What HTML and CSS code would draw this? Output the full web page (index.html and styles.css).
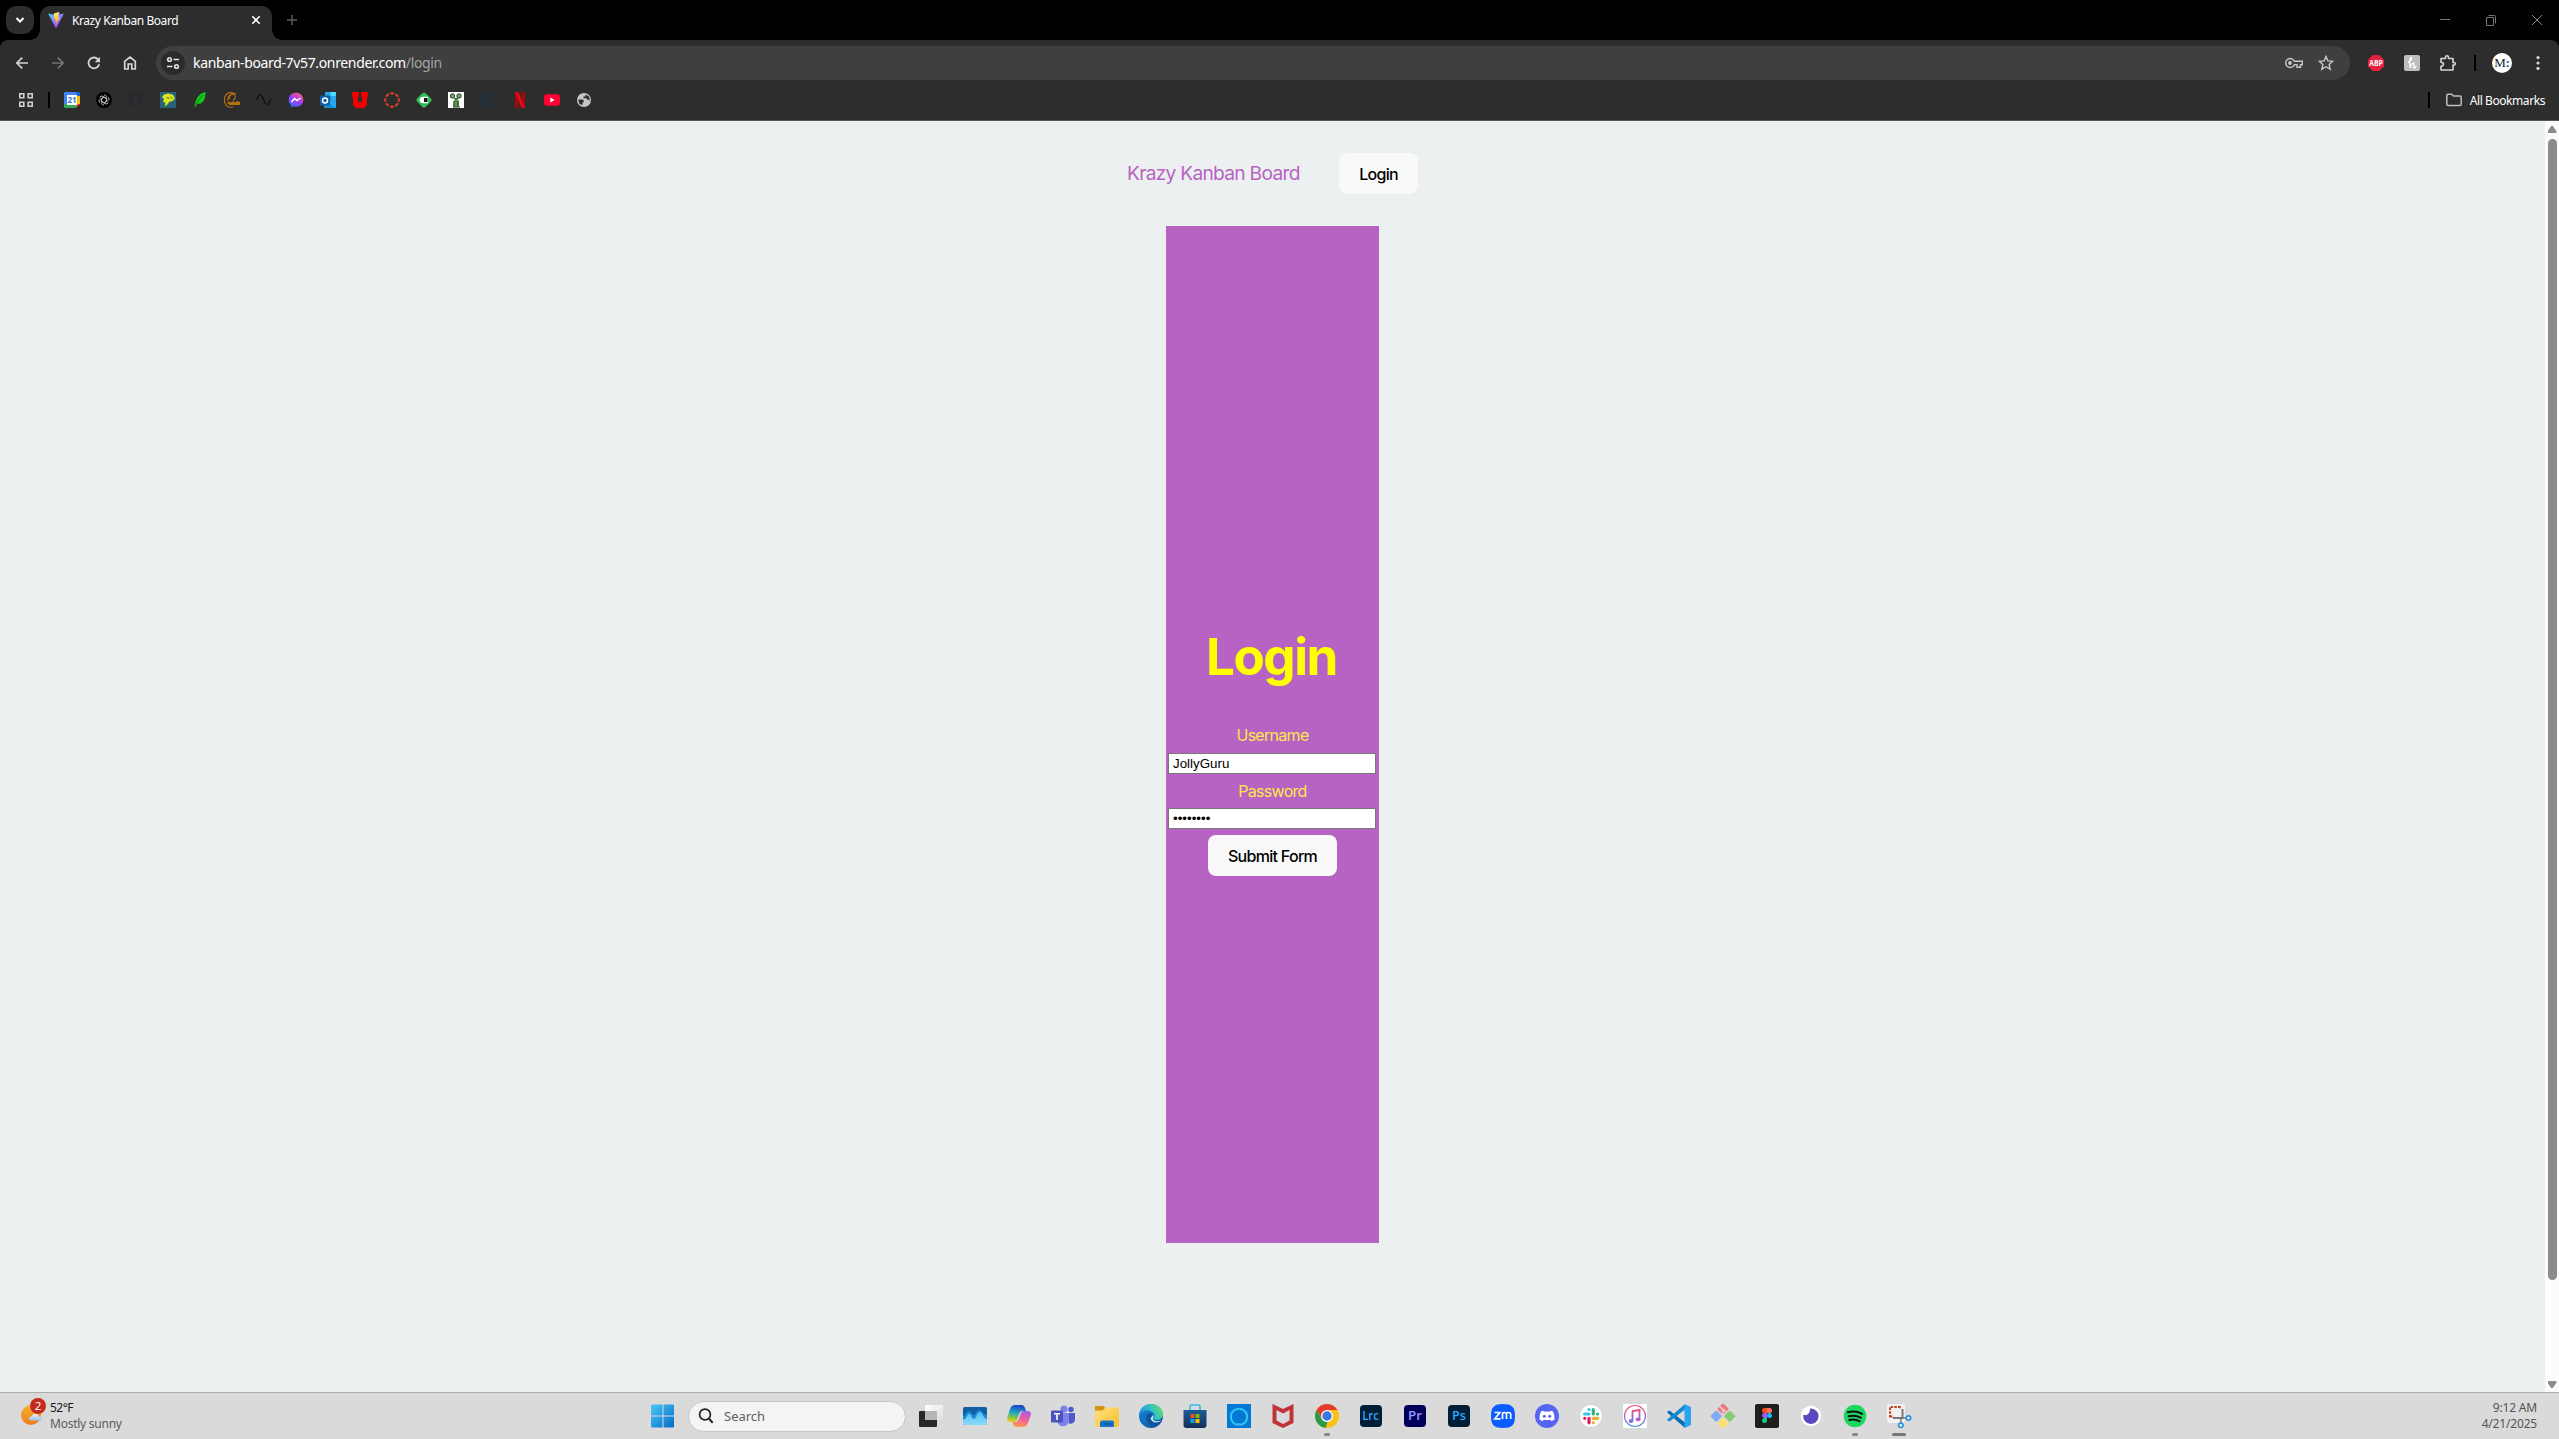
FILE: index.html
```
<!DOCTYPE html>
<html lang="en">
<head>
<meta charset="utf-8">
<title>Krazy Kanban Board</title>
<link rel="stylesheet" href="styles.css">
</head>
<body>
<div class="screen">
  <header class="browser">
    <div class="tabstrip">
      <div class="tab-search"><svg width="12" height="12" viewBox="0 0 12 12"><path d="M2.500 4l3.500 3.600L9.500 4" fill="none" stroke="#fff" stroke-width="2"/></svg></div>
      <div class="tab">
        <svg width="16" height="16" viewBox="0 0 16 16"><defs><linearGradient id="vite" x1="0" y1="0" x2=".7" y2="1"><stop offset="0" stop-color="#41d1ff"/><stop offset="1" stop-color="#bd34fe"/></linearGradient><linearGradient id="bolt" x1="0" y1="0" x2="0" y2="1"><stop offset="0" stop-color="#ffea83"/><stop offset="1" stop-color="#ffa800"/></linearGradient></defs><path d="M0 1.500L8 3l8-1.500L8.300 16H7.700z" fill="url(#vite)"/><path d="M11.500 0L6 1.200 5.600 7l2-.4L7 9.500l1.600-.4L8 12.500l4-7.300-2 .4z" fill="url(#bolt)"/></svg>
        <span class="tab-title">Krazy Kanban Board</span>
        <svg class="tab-close" width="12" height="12" viewBox="0 0 12 12"><path d="M2.300 2.300l7.400 7.400M9.700 2.300L2.300 9.700" stroke="#fff" stroke-width="1.600"/></svg>
      </div>
      <svg class="new-tab" width="12" height="12" viewBox="0 0 12 12"><path d="M6 1v10M1 6h10" stroke="#5c5c5c" stroke-width="1.500"/></svg>
      <div class="window-buttons">
        <svg width="12" height="12" viewBox="0 0 12 12"><path d="M1 5.500h10" stroke="#777"/></svg>
        <svg width="12" height="12" viewBox="0 0 12 12"><path d="M1.500 3.500h7v8h-7zM3.500 1.500h6q1 0 1 1v7" fill="none" stroke="#777"/></svg>
        <svg width="12" height="12" viewBox="0 0 12 12"><path d="M1 1l10 10M11 1L1 11" stroke="#888"/></svg>
      </div>
    </div>
    <div class="toolbar">
      <div class="nav-icons">
        <svg width="16" height="16" viewBox="0 0 16 16"><path d="M14 8H3M8.200 2.600L2.800 8l5.400 5.400" fill="none" stroke="#d5d5d5" stroke-width="1.700"/></svg>
        <svg width="16" height="16" viewBox="0 0 16 16"><path d="M2 8h11M7.800 2.600L13.200 8l-5.400 5.400" fill="none" stroke="#737373" stroke-width="1.700"/></svg>
        <svg width="16" height="16" viewBox="0 0 16 16"><path d="M13.200 9.200A5.400 5.400 0 1 1 12 4.300L13.300 6" fill="none" stroke="#d5d5d5" stroke-width="1.800"/><path d="M14 1.800v5.400H8.700z" fill="#d5d5d5"/></svg>
        <svg width="16" height="16" viewBox="0 0 16 16"><path d="M2.700 14V6.400L8 2.200l5.300 4.200V14H9.800V9H6.200v5z" fill="none" stroke="#d5d5d5" stroke-width="1.700"/></svg>
      </div>
      <div class="omnibox">
        <span class="site-info"><svg width="14" height="14" viewBox="0 0 14 14" fill="none" stroke="#e3e3e3" stroke-width="1.600"><circle cx="3.500" cy="3.500" r="1.800"/><path d="M7.500 3.500H13M1 10.500h5.500"/><circle cx="10.500" cy="10.500" r="1.800"/></svg></span>
        <span class="url">kanban-board-7v57.onrender.com<span class="path">/login</span></span>
        <div class="omni-icons">
          <svg width="18" height="12" viewBox="0 0 18 12" fill="none" stroke="#c7c7c7" stroke-width="1.400"><path d="M9.300 4.200A4.500 4.500 0 1 0 9.300 7.800H12v2.400h3.500V7.800h1.800V4.200z"/><circle cx="5" cy="6" r="1.200" fill="#c7c7c7"/></svg>
          <svg width="16" height="16" viewBox="0 0 16 16"><path d="M8 1.500l1.900 4.400 4.800.4-3.600 3.200 1.100 4.700L8 11.700l-4.200 2.500 1.100-4.700L1.300 6.300l4.800-.4z" fill="none" stroke="#c7c7c7" stroke-width="1.400"/></svg>
        </div>
      </div>
      <div class="extensions">
        <svg width="16" height="16" viewBox="0 0 16 16"><path d="M4.700 0h6.600L16 4.700v6.600L11.300 16H4.700L0 11.300V4.700z" fill="#e61f3e"/><text x="8" y="10.900" text-anchor="middle" font-family="Open Sans, sans-serif" font-size="8" font-weight="700" fill="#fff" textLength="13.600" lengthAdjust="spacingAndGlyphs">ABP</text></svg>
        <svg class="honey" width="16" height="16" viewBox="0 0 16 16"><rect width="16" height="16" rx="2" fill="#bdbdbd"/><path d="M4 7.500C6 7 8 4.500 7.500 3S5.700 4 5.700 7L6.200 13c.5-4.500 3.800-6 3.800-3.800 0 1.800-1 3.800 0 3.800s1.700-1 1.900-2" fill="none" stroke="#fff" stroke-width="1.300"/></svg>
        <svg class="puzzle" width="18" height="18" viewBox="0 0 18 18"><path d="M2 4.500h4.500V3.200a1.500 1.500 0 0 1 3 0v1.300H14v4h1a1.300 1.300 0 0 1 0 2.600h-1V16H2v-3.800q2.500-.4 2.500-2T2 8.300z" fill="none" stroke="#d5d5d5" stroke-width="1.600" stroke-linejoin="round"/></svg>
        <i class="divider"></i>
        <span class="avatar">M<b>:</b></span>
        <svg class="menu" width="4" height="16" viewBox="0 0 4 16" fill="#d8d8d8"><circle cx="2" cy="2.600" r="1.600"/><circle cx="2" cy="8" r="1.600"/><circle cx="2" cy="13.400" r="1.600"/></svg>
      </div>
    </div>
    <div class="bookmarks">
      <svg class="apps" width="14" height="14" viewBox="0 0 14 14" fill="none" stroke="#d0d0d0" stroke-width="1.600"><path d="M.8.800h4v4h-4zM9.200.800h4v4h-4zM.8 9.200h4v4h-4zM9.200 9.200h4v4h-4z"/></svg>
      <i class="divider"></i>
      <div class="bookmark-icons">
        <svg viewBox="0 0 16 16"><path d="M0 1q0-1 1-1h11v12H0z" fill="#4285f4"/><path d="M12 0h3q1 0 1 1v3h-4z" fill="#1967d2"/><path d="M12 4h4v8h-4z" fill="#fbbc04"/><path d="M0 12h12v4H1q-1 0-1-1z" fill="#34a853"/><path d="M12 12h4l-4 4z" fill="#ea4335"/><path d="M3 3h10v10H3z" fill="#fff"/><text x="8" y="11" text-anchor="middle" font-family="Open Sans, sans-serif" font-size="8" font-weight="700" fill="#3275df">21</text></svg>
        <svg viewBox="0 0 16 16"><circle cx="8" cy="8" r="8" fill="#000"/><g fill="none" stroke="#c8c8c8" stroke-width=".8"><path id="petal" d="M8 2.800a2.700 2.700 0 0 1 2.700 2.700v3.600L8 10.700"/><use href="#petal" transform="rotate(60 8 8)"/><use href="#petal" transform="rotate(120 8 8)"/><use href="#petal" transform="rotate(180 8 8)"/><use href="#petal" transform="rotate(240 8 8)"/><use href="#petal" transform="rotate(300 8 8)"/></g></svg>
        <svg viewBox="0 0 16 16"><path d="M6 15v-3c-2 1-3-1-4-1.500M10 15v-3.500c2.500-.3 4-1.500 4-4 0-1.300-.4-2-1-2.800.2-1 .1-1.700-.2-2.400-1 0-1.700.4-2.500.9a9 9 0 0 0-4.600 0C4.900 2.700 4.200 2.300 3.200 2.300 2.900 3 2.800 3.700 3 4.700c-.6.800-1 1.500-1 2.800 0 2.500 1.500 3.700 4 4" fill="none" stroke="#24292f" stroke-width="1.800"/></svg>
        <svg viewBox="0 0 16 16"><path d="M0 0h16v16H0z" fill="#27647c"/><path d="M2 5l2-2.500 4-1 5 1.300L15 6.500 12.500 9 9 10l-1 2-3.500 2.500L5.500 11 3 9.500 4 7z" fill="#dce51f"/><path d="M6.500 5.500l3 .8M10.500 5l2 1.500" stroke="#427129"/></svg>
        <svg viewBox="0 0 16 16"><path d="M2.500 15.500C3 11 4 6 8 2.500c2-1.700 4-2 5.700-2.300C13.500 4 13 9 8.500 11.500L5.500 12z" fill="#0ecb16"/><path d="M3 15.500Q5.500 8 11 3" fill="none" stroke="#267023"/></svg>
        <svg viewBox="0 0 16 16"><g fill="none" stroke="#b6720d" stroke-width="1.200"><path d="M9 .8C2-1-1 6 1 11c1 3 4 5 8 4M12 1.500C7 1 3.500 4 3.500 9"/><path d="M6 7a3 3 0 1 1 3 1"/></g><path d="M3 11l2-1.500 2 1 2-1.500 2 1.500L13 9l3 1v3H6z" fill="#b6720d"/></svg>
        <svg viewBox="0 0 16 16"><path d="M1 8C2 2 5 1 7 6s4 9 6 5l2-4" fill="none" stroke="#111" stroke-width="1.300"/></svg>
        <svg viewBox="0 0 16 16"><defs><linearGradient id="msgr" x1=".2" y1="1" x2=".8" y2="0"><stop offset="0" stop-color="#2b6dff"/><stop offset=".5" stop-color="#a03cff"/><stop offset="1" stop-color="#ff6171"/></linearGradient></defs><path d="M8 .7C3.600.700.700 3.800.700 7.800c0 2.100.800 4 2.200 5.200v2.500l2.300-1.200c.9.300 1.800.4 2.800.4 4.400 0 7.300-3 7.300-7S12.400.700 8 .7z" fill="url(#msgr)"/><path d="M3.500 10l3-3.500 2.500 2L12.500 6" fill="none" stroke="#fff" stroke-width="1.500"/></svg>
        <svg viewBox="0 0 16 16"><path d="M5 0h11v8H5z" fill="#28a8ea"/><path d="M5 4h5.500v4H5z" fill="#0364b8"/><path d="M10.500 0H16v4h-5.500z" fill="#50d9ff"/><path d="M4 8h12v7q0 1-1 1H5q-1 0-1-1z" fill="#1490df"/><path d="M16 8v8L5 9z" fill="#28a8ea"/><rect y="3.500" width="10" height="10" rx=".8" fill="#0f5fa8"/><circle cx="5" cy="8.500" r="2.500" fill="none" stroke="#fff" stroke-width="1.500"/></svg>
        <svg viewBox="0 0 16 16"><path d="M0 0h7v5H6v5h4V5H9V0h7v5h-1v8l-3 3H4l-3-3V5H0z" fill="#f00000"/></svg>
        <svg viewBox="0 0 16 16"><circle cx="8" cy="8" r="6.800" fill="none" stroke="#d64027" stroke-width="2" stroke-dasharray="3.900 1.440" stroke-dashoffset="1.950"/></svg>
        <svg viewBox="0 0 16 16"><rect x="2" y="2" width="12" height="12" rx="2.500" transform="rotate(45 8 8)" fill="#2ebd59"/><path d="M3.500 8q.5-3.300 4-3.300H12v6.600H7.500q-3.500 0-4-3.300z" fill="#fff"/><path d="M8 6h3.500v4H8z" fill="#111"/></svg>
        <svg viewBox="0 0 16 16"><path d="M0 0h16v16H0z" fill="#fff"/><path d="M5 15l1-7 3-2 2 3v6z" fill="#5e9351"/><g fill="#79a66e" stroke="#29442a"><circle cx="4.500" cy="4" r="2.200"/><circle cx="11" cy="4" r="2.200"/><path d="M6 6l2 1 2-1M6 9v5M10 9v5M5 15h7"/></g></svg>
        <svg viewBox="0 0 16 16"><path d="M1 2h9v12H1zM8 6H4v5h4M12 14h4" fill="none" stroke="#1d3345" stroke-width="1.500"/></svg>
        <svg viewBox="0 0 16 16"><path d="M3 0h3.500v16H3zM9.500 0H13v16H9.500z" fill="#a10811"/><path d="M3 0h3.500L13 16H9.500z" fill="#e50914"/></svg>
        <svg viewBox="0 0 16 16"><rect y="2.200" width="16" height="11.600" rx="3" fill="#ff0033"/><path d="M6.300 5.500L10.600 8l-4.300 2.500z" fill="#fff"/></svg>
        <svg viewBox="0 0 16 16"><circle cx="8" cy="8" r="7" fill="#c4c7c9"/><path d="M2.200 7.500h4q1.600 0 1.600 1.500v1.200H6.500V13L3.500 12zM9.500 2.500L13 4.500l.8 4-2-.8q-.5-1.500-2-1.500H7.500V4.500h2z" fill="#2d2d2d"/></svg>
      </div>
      <div class="all-bookmarks">
        <i class="divider"></i>
        <svg width="16" height="14" viewBox="0 0 16 14"><path d="M.8 2.500q0-1.300 1.300-1.300h3.700l1.700 1.900H14q1.200 0 1.200 1.300v6.900q0 1.300-1.300 1.300H2.100Q.8 12.600.8 11.300z" fill="none" stroke="#bdbdbd" stroke-width="1.500"/></svg>
        <span class="all-label">All Bookmarks</span>
      </div>
    </div>
  </header>

  <div class="viewport">
    <main class="page">
      <nav class="site-nav">
        <a class="brand">Krazy Kanban Board</a>
        <button class="btn">Login</button>
      </nav>
      <section class="login">
        <form class="form">
          <h1 class="title">Login</h1>
          <label class="label">Username</label>
          <input class="field" type="text" value="JollyGuru">
          <label class="label second">Password</label>
          <input class="field" type="password" value="password">
          <button class="btn submit" type="button">Submit Form</button>
        </form>
      </section>
    </main>
    <aside class="scrollbar">
      <i class="arrow up"></i><i class="thumb"></i><i class="arrow down"></i>
    </aside>
  </div>

  <footer class="taskbar">
    <div class="weather">
      <svg width="26" height="28" viewBox="0 0 26 28"><defs><linearGradient id="sun" x1="0" y1="0" x2="0" y2="1"><stop offset="0" stop-color="#f5b52c"/><stop offset="1" stop-color="#ee7a20"/></linearGradient><linearGradient id="cloud" x1="0" y1="0" x2="0" y2="1"><stop offset="0" stop-color="#edf5ff"/><stop offset="1" stop-color="#9fbfe8"/></linearGradient></defs><circle cx="11" cy="17" r="10" fill="url(#sun)"/><path d="M11 22.500q-2.500-.2-2-2.500.5-1.800 2.500-1.500 1.500-3.500 5-2.500 2 .8 2.300 2.500 3.500-.5 3.500 2 0 1.800-2.300 2z" fill="url(#cloud)"/><circle cx="18" cy="8" r="8" fill="#c42b1c"/><text x="18" y="12.300" text-anchor="middle" font-family="Noto Sans, sans-serif" font-size="11.500" fill="#fff">2</text></svg>
      <div class="weather-text"><span class="temp">52°F</span><span class="sky">Mostly sunny</span></div>
    </div>
    <div class="dock">
      <svg class="start" width="24" height="24" viewBox="0 0 24 24"><defs><linearGradient id="win" gradientUnits="userSpaceOnUse" x1="0" y1="0" x2="24" y2="24"><stop offset="0" stop-color="#4cc9f8"/><stop offset="1" stop-color="#0069c6"/></linearGradient></defs><path d="M1 .500H11.500V11.500H0v-10q0-1 1-1zM12.500.500h10q.5 0 .5 1v10H12.500zM0 12.500h11.500v11H1q-1 0-1-1zM12.500 12.500H23v10q0 1-1 1h-9.500z" fill="url(#win)"/></svg>
      <div class="search"><svg width="16" height="16" viewBox="0 0 16 16"><circle cx="7" cy="6.500" r="5.400" fill="none" stroke="#222" stroke-width="1.700"/><path d="M11 10.800l3.700 4" stroke="#222" stroke-width="2"/></svg><span class="search-label">Search</span></div>
      <div class="apps-row">
        <svg viewBox="0 0 24 24"><defs><linearGradient id="tv" x1="0" y1="0" x2="1" y2="1"><stop offset="0" stop-color="#fff"/><stop offset="1" stop-color="#ddd"/></linearGradient></defs><rect y="7" width="18" height="16" rx="1" fill="#272727"/><rect x="6" y="1" width="18" height="15" rx="1" fill="url(#tv)"/><path d="M6 7h12v9H6z" fill="#b5b5b5"/></svg>
        <svg viewBox="0 0 24 24"><defs><linearGradient id="gl" x1="0" y1="0" x2="0" y2="1"><stop offset="0" stop-color="#4ec0f5"/><stop offset="1" stop-color="#8cdafa"/></linearGradient></defs><rect y="3" width="24" height="18" rx="1.500" fill="#115ea3"/><path d="M0 12c3-1 4-5 6-5s3 4 5 4 2-5 5-5 3 4 8 5v9H0z" fill="#1f87d5"/><path d="M0 15.500c4 0 4-5.500 6-5.500s3 5 5 5 3-7 6-7 2 6 7 7v4.500q0 1.500-1.500 1.500h-21Q0 21 0 19.500z" fill="url(#gl)"/></svg>
        <svg viewBox="0 0 24 24"><defs><linearGradient id="cpa" x1=".5" y1="0" x2=".3" y2="1"><stop offset="0" stop-color="#1746c7"/><stop offset=".45" stop-color="#22a5c5"/><stop offset=".75" stop-color="#85c744"/><stop offset="1" stop-color="#f2cd18"/></linearGradient><linearGradient id="cpb" x1=".6" y1="0" x2=".4" y2="1"><stop offset="0" stop-color="#a65be8"/><stop offset=".5" stop-color="#ee5f9b"/><stop offset="1" stop-color="#ff9c51"/></linearGradient></defs><path d="M8 1h7q2 0 3 3l1 3h-4q-2 0-3 3l-1.500 5Q9.500 18 7 18H3q-4 0-2.500-5L3 5q1.500-4 5-4z" fill="url(#cpa)"/><path d="M16 23H9q-2 0-3-3l-.5-2H9q2 0 3-3l1.500-5Q14.500 7 17 7h4q4 0 2.500 5L21 19q-1.500 4-5 4z" fill="url(#cpb)"/></svg>
        <svg viewBox="0 0 24 24"><circle cx="20" cy="5.500" r="2.700" fill="#5059c9"/><circle cx="13" cy="5" r="3.600" fill="#7b83eb"/><path d="M16 9h8v6.500a4.500 4.500 0 0 1-6 4z" fill="#5059c9"/><path d="M7 9h11v7.500a6 6 0 0 1-11 3z" fill="#7b83eb"/><rect y="6.500" width="12" height="12" rx="1" fill="#4b53bc"/><path d="M3 9.700h6M6 9.700V16" stroke="#fff" stroke-width="1.600"/></svg>
        <svg viewBox="0 0 24 24"><defs><linearGradient id="fold" x1="0" y1="0" x2="1" y2="1"><stop offset="0" stop-color="#ffe17c"/><stop offset="1" stop-color="#f9bf30"/></linearGradient></defs><path d="M0 3q0-1 1-1h7l3 2.500L9 7H0z" fill="#d38f10"/><path d="M0 6.500h7.500l3-3H23q1 0 1 1V22q0 1-1 1H1q-1 0-1-1z" fill="url(#fold)"/><path d="M5 23v-4.500q0-2 2-2h10q2 0 2 2V23z" fill="#1673c8"/><path d="M8 20h8" stroke="#0b4f94" stroke-width="1.300"/></svg>
        <svg viewBox="0 0 24 24"><defs><linearGradient id="ea" x1="0" y1=".6" x2="1" y2=".2"><stop offset="0" stop-color="#1a8fd8"/><stop offset=".5" stop-color="#2bbfd0"/><stop offset="1" stop-color="#70df58"/></linearGradient><linearGradient id="eb" x1="0" y1="0" x2="1" y2="1"><stop offset="0" stop-color="#1a8be0"/><stop offset="1" stop-color="#0c4c96"/></linearGradient></defs><circle cx="12" cy="12" r="12" fill="url(#eb)"/><path d="M.2 11C1 4 6 0 12 0c7 0 12 5 12 10 0 4-3 6-6 6-2.500 0-4-.8-4-1.800s1.200-1.200 1.200-3C15 8 11 6.500 8 6.500 4 6.500 1 9 .2 11z" fill="url(#ea)"/><path d="M9 10c-4 5 0 11 5 12 4 0 7-3 8-4.500-4 2-8 .5-9-1.500-.9-1.800.5-2.500.5-4.500S10.500 8.500 9 10z" fill="#0f549e"/><path d="M12 15.500c-1-2 1.500-2.800 1.500-4.500 2 2-.5 2.800.5 4.500 2 3 6.500 1.800 8.500.5-1 2-8 4.500-10.500-.5z" fill="#d9edf0"/></svg>
        <svg viewBox="0 0 24 24"><defs><linearGradient id="store" x1="0" y1="0" x2="0" y2="1"><stop offset="0" stop-color="#1d5d97"/><stop offset="1" stop-color="#152f57"/></linearGradient></defs><path d="M7 6V2.500Q7 1 8.500 1h7Q17 1 17 2.500V6" fill="none" stroke="#36b9e8" stroke-width="1.700"/><path d="M.5 6h23v15q0 3-3 3h-17q-3 0-3-3z" fill="url(#store)"/><path d="M7.500 10h4v4h-4z" fill="#f25022"/><path d="M12.500 10h4v4h-4z" fill="#7fba00"/><path d="M7.500 15h4v4h-4z" fill="#00a4ef"/><path d="M12.500 15h4v4h-4z" fill="#ffb900"/></svg>
        <svg viewBox="0 0 24 24"><path d="M0 0h24v24H0z" fill="#0078d4"/><path d="M9 20.500a8.200 8.200 0 1 1 6 0l-3-.3z" fill="none" stroke="#31c4f3" stroke-width="2"/></svg>
        <svg viewBox="0 0 24 24"><path d="M1.500 0L12 5 22.500 0v19L12 24 1.500 19zM5.500 6v10.500L12 20l6.500-3.500V6L12 9.500z" fill="#c03336" fill-rule="evenodd"/></svg>
        <svg viewBox="0 0 24 24"><circle cx="12" cy="12" r="12" fill="#fbc116"/><path d="M1.600 6A12 12 0 0 1 22.400 6H12L7 15z" fill="#e33b2e"/><path d="M1.600 6l5.200 9 5.700 3-2 5.900A12 12 0 0 1 1.600 6z" fill="#2b9b48"/><circle cx="12" cy="12" r="6" fill="#fff"/><circle cx="12" cy="12" r="4.700" fill="#3777e3"/></svg>
        <svg viewBox="0 0 24 24"><rect x="1" y="1" width="22" height="22" rx="4" fill="#001e36"/><text x="11.500" y="16" text-anchor="middle" font-family="Open Sans, sans-serif" font-size="13" font-weight="600" fill="#31a8ff" textLength="16.500" lengthAdjust="spacingAndGlyphs">Lrc</text></svg>
        <svg viewBox="0 0 24 24"><rect x="1" y="1" width="22" height="22" rx="4" fill="#00005b"/><text x="12" y="16" text-anchor="middle" font-family="Open Sans, sans-serif" font-size="12.500" font-weight="600" fill="#9999ff" textLength="14" lengthAdjust="spacingAndGlyphs">Pr</text></svg>
        <svg viewBox="0 0 24 24"><rect x="1" y="1" width="22" height="22" rx="4" fill="#001e36"/><text x="12" y="16" text-anchor="middle" font-family="Open Sans, sans-serif" font-size="12.500" font-weight="600" fill="#31a8ff" textLength="14" lengthAdjust="spacingAndGlyphs">Ps</text></svg>
        <svg viewBox="0 0 24 24"><path d="M12 0c9 0 12 3 12 12s-3 12-12 12S0 21 0 12 3 0 12 0z" fill="#0b5cff"/><path d="M3.500 8.500h5.300l-5 6.300h5.700M11.500 15V10q0-1.500 1.800-1.500T15.500 10v5m0-5q0-1.500 2-1.500t2.200 1.500v5" fill="none" stroke="#fff" stroke-width="1.700"/></svg>
        <svg viewBox="0 0 24 24"><circle cx="12" cy="12" r="12" fill="#5865f2"/><path d="M8 6.800l1.500.9q2.500-.4 5 0l1.500-.9 2 .8q2 3.500 1.500 8l-3 1.600-1.200-1.500q-3.300.8-6.600 0l-1.200 1.500-3-1.600q-.5-4.500 1.500-8z" fill="#fff"/><circle cx="9.300" cy="12.300" r="1.500" fill="#5865f2"/><circle cx="14.700" cy="12.300" r="1.500" fill="#5865f2"/></svg>
        <svg viewBox="0 0 24 24"><circle cx="12" cy="12" r="11.500" fill="#fff" stroke="#ccc" stroke-width=".8"/><g stroke-width="3.200" stroke-linecap="round"><path d="M10 5.500h.1M5.500 10H10" stroke="#36c5f0"/><path d="M14.300 5.500v4.500M18.500 10h.1" stroke="#2eb67d"/><path d="M14.300 14.300h4.500M14.300 18.700v.1" stroke="#ecb22e"/><path d="M10 14.300v4.500M5.700 14.300h.1" stroke="#e01e5a"/></g></svg>
        <svg viewBox="0 0 24 24"><defs><linearGradient id="itn" x1="0" y1="0" x2="0" y2="1"><stop offset="0" stop-color="#f0506e"/><stop offset=".55" stop-color="#a95fcf"/><stop offset="1" stop-color="#4a8fe8"/></linearGradient></defs><path d="M0 0h24v24H0z" fill="#fff"/><circle cx="12" cy="12" r="10.500" fill="none" stroke="url(#itn)" stroke-width="1.200"/><path d="M9.500 17V7.300l7-1.500V15" fill="none" stroke="url(#itn)" stroke-width="1.800"/><ellipse cx="8" cy="17" rx="2.400" ry="1.900" fill="#8a6be0"/><ellipse cx="15" cy="15.300" rx="2.400" ry="1.900" fill="#b256c8"/></svg>
        <svg viewBox="0 0 24 24"><path d="M2.500 6.500L18 18.500V24L.5 8.800q-.5-.8 0-1.300z" fill="#0c6db4"/><path d="M2.500 17.500L18 5.500V0L.5 15.200q-.5.800 0 1.300z" fill="#1689d3"/><path d="M17.500 0L24 3v18l-6.500 3z" fill="#2aa6f0"/></svg>
        <svg viewBox="0 0 24 24"><rect x="7.800" y=".8" width="8.400" height="8.400" rx="1" transform="rotate(45 12 5)" fill="#f0797a"/><rect x="1" y="8" width="8.400" height="8.400" rx="1" transform="rotate(45 5.200 12.200)" fill="#80aaf7"/><rect x="14.600" y="8" width="8.400" height="8.400" rx="1" transform="rotate(45 18.800 12.200)" fill="#85cc70"/><rect x="7.800" y="14.800" width="8.400" height="8.400" rx="1" transform="rotate(45 12 19)" fill="#fbdf7b"/><path d="M8 2l4 3.500v5M12 5l3 3" fill="none" stroke="#d9d9d9" stroke-width="1.500"/></svg>
        <svg viewBox="0 0 24 24"><rect width="24" height="24" rx="2" fill="#1e1e1e"/><path d="M12 4H9.500a2.500 2.500 0 0 0 0 5H12z" fill="#f24e1e"/><path d="M12 4h2.500a2.500 2.500 0 0 1 0 5H12z" fill="#ff7262"/><path d="M12 9H9.500a2.500 2.500 0 0 0 0 5H12z" fill="#a259ff"/><circle cx="14.500" cy="11.500" r="2.500" fill="#1abcfe"/><path d="M12 14H9.500a2.500 2.500 0 1 0 2.500 2.500z" fill="#0acf83"/></svg>
        <svg viewBox="0 0 24 24"><circle cx="12" cy="12" r="10.200" fill="#fff"/><path d="M12 4.500a7.700 7.700 0 1 1-7.700 6.300A5 5 0 0 0 10.800 4.600z" fill="#5849be"/></svg>
        <svg viewBox="0 0 24 24"><circle cx="12" cy="12" r="11.300" fill="#1ed760"/><path d="M4.800 8.300q7.500-2.300 14.400 1.500M5.600 12.300q6.400-1.800 12.300 1.400M6.300 16q5.300-1.400 10.200 1.200" fill="none" stroke="#111" stroke-width="2" stroke-linecap="round"/></svg>
        <svg viewBox="0 0 24 24"><rect width="18" height="19" y="0" rx="2" fill="#f1f1f1"/><path d="M3 13.500V3h10v2M3 12.500h3" fill="none" stroke="#c43e1c" stroke-width="2" stroke-dasharray="2.500 1.200"/><path d="M15.500 5v9H6" fill="none" stroke="#777" stroke-width="2"/><path d="M15 14h5M14 14v5" stroke="#777" stroke-width="1.500"/><circle cx="21.500" cy="14" r="2.200" fill="#fff" stroke="#2794dc" stroke-width="1.700"/><circle cx="13.800" cy="21.300" r="2.200" fill="#fff" stroke="#2794dc" stroke-width="1.700"/></svg>
      </div>
      <i class="running chrome"></i><i class="running spotify"></i><i class="running snip"></i>
    </div>
    <div class="clock"><span class="time">9:12 AM</span><span class="date">4/21/2025</span></div>
  </footer>
</div>
</body>
</html>
```
FILE: styles.css
```
* { box-sizing: border-box; }
body { margin: 0; font-family: "Noto Sans", sans-serif; }
svg { display: block; flex: none; }
i { display: block; flex: none; }

.screen { width: 2559px; height: 1439px; display: flex; flex-direction: column; overflow: hidden; }

/* Browser chrome */
.browser { flex: none; height: 121px; background: #000; border-bottom: 1px solid #555; }
.tabstrip { height: 40px; display: flex; padding: 6px 16px 0 6px; }
.tab-search { width: 28px; height: 28px; border-radius: 10px; background: #2d2d2d; display: grid; place-items: center; }
.tab { position: relative; width: 232px; height: 34px; margin-left: 6px; padding: 0 10px 6px 8px; border-radius: 10px 10px 0 0; background: #2d2d2d; display: flex; align-items: center; }
.tab::before, .tab::after { content: ""; position: absolute; bottom: 0; width: 10px; height: 10px; }
.tab::before { left: -10px; background: radial-gradient(circle at 0 0, #000 9.500px, #2d2d2d 10px); }
.tab::after { right: -10px; background: radial-gradient(circle at 100% 0, #000 9.500px, #2d2d2d 10px); }
.tab-title { margin-left: 8px; font-size: 12px; color: #fff; white-space: nowrap; letter-spacing: -0.430px; }
.tab-close { margin-left: auto; }
.new-tab { margin: 8px 0 0 14px; }
.window-buttons { margin: 8px 0 0 auto; display: flex; gap: 34px; }

.toolbar { height: 40px; padding: 6px 19px 0 14px; border-radius: 8px 8px 0 0; background: #2d2d2d; display: flex; align-items: center; }
.nav-icons { display: flex; gap: 20px; }
.omnibox { width: 2194px; height: 34px; margin-left: 18px; padding: 0 16px 0 5px; border-radius: 17px; background: #3f3f3f; display: flex; align-items: center; }
.site-info { width: 24px; height: 24px; border-radius: 50%; background: #2b2b2b; display: grid; place-items: center; }
.url { margin: -1px 0 0 8px; font-size: 14px; color: #fff; white-space: nowrap; letter-spacing: -0.350px; }
.path { color: #a5a5a5; }
.omni-icons { margin-left: auto; display: flex; align-items: center; gap: 15px; }
.extensions { flex: 1; margin-left: 18px; display: flex; align-items: center; }
.honey { margin-left: 20px; }
.puzzle { margin: 0 17px 0 19px; }
.divider { width: 2px; height: 16px; background: #000; }
.avatar { width: 20px; height: 20px; margin-left: 16px; border-radius: 50%; background: #fff; color: #222; font: 13px/20px "Liberation Serif", serif; letter-spacing: -0.300px; text-align: center; white-space: nowrap; }
.avatar b { color: #2f5f9e; }
.menu { margin-left: auto; }

.bookmarks { height: 40px; padding: 0 14px 0 19px; background: #2d2d2d; display: flex; align-items: center; }
.bookmarks > .divider { margin: 0 14px 0 15px; }
.bookmark-icons { display: flex; gap: 16px; }
.bookmark-icons svg { width: 16px; height: 16px; }
.all-bookmarks { margin-left: auto; display: flex; align-items: center; }
.all-bookmarks svg { margin: 0 8px 0 16px; }
.all-label { font-size: 12px; color: #fff; letter-spacing: -0.430px; white-space: nowrap; }

/* Page */
.viewport { flex: 1; display: flex; min-height: 0; }
.page { flex: 1; background: #ecf0f1; font-family: Inter, sans-serif; display: flex; flex-direction: column; align-items: center; padding-top: 32px; }
.site-nav { width: 291px; display: flex; align-items: center; justify-content: space-between; height: 41px; }
.brand { margin-top: -2px; font-size: 19.200px; color: #b763c3; white-space: nowrap; letter-spacing: -0.730px; }
.btn { height: 41px; padding: 0 19px; border: 1px solid transparent; border-radius: 8px; background: #f9f9f9; color: #000; font: 500 16px Inter, sans-serif; letter-spacing: -0.700px; white-space: nowrap; }
.login { width: 213px; height: 1017px; margin-top: 32px; background: #b763c3; display: flex; justify-content: center; }
.form { width: 213px; padding-top: 397px; display: flex; flex-direction: column; align-items: center; }
.title { margin: 0 2px 34px 0; height: 66px; font-size: 51.200px; line-height: 66px; font-weight: 700; color: #ff0; letter-spacing: -1.500px; }
.label { height: 24px; font-size: 16px; line-height: 24px; color: #ffe74a; letter-spacing: -0.700px; }
.label.second { margin-top: 5px; }
.field { width: 208px; height: 21px; margin: 6px 0 0 -1px; padding: 0 3px 0 4px; border: 1px solid #767676; background: #fff; color: #000; font: 13.333px "Liberation Sans", sans-serif; outline: 0; }
.label.second + .field { margin-top: 5px; }
.submit { margin-top: 6px; }

.scrollbar { width: 14px; background: #fcfcfc; display: flex; flex-direction: column; align-items: center; padding: 5px 0 4px; }
.arrow { width: 9px; height: 7px; background: #8b8b8b; }
.up { clip-path: polygon(40% 0, 60% 0, 100% 80%, 95% 100%, 5% 100%, 0 80%); }
.down { clip-path: polygon(5% 0, 95% 0, 100% 20%, 60% 100%, 40% 100%, 0 20%); margin-top: auto; }
.thumb { width: 9px; height: 1141px; margin-top: 6px; border-radius: 5px; background: #8b8b8b; }

/* Taskbar */
.taskbar { flex: none; height: 47px; border-top: 1px solid #adadad; background: #dadada; display: flex; justify-content: space-between; position: relative; }
.weather { display: flex; width: 651px; padding: 5px 0 0 20px; }
.weather svg { height: 28px; }
.weather-text { display: flex; flex-direction: column; margin: 2px 0 0 4px; font-size: 12px; line-height: 16px; white-space: nowrap; }
.weather-text span { width: max-content; }
.temp { color: #1a1a1a; letter-spacing: -0.500px; }
.sky { color: #5c5c5c; letter-spacing: -0.250px; }
.dock { position: relative; flex: 1; display: flex; align-items: center; }
.search { width: 218px; height: 31px; margin-left: 13px; padding-left: 9px; border: 1px solid #c6c6c6; border-radius: 16px; background: #f4f4f4; display: flex; align-items: center; }
.search-label { margin-left: 10px; font-size: 13px; color: #606060; }
.apps-row { display: flex; gap: 20px; margin-left: 13px; }
.apps-row svg { width: 24px; height: 24px; overflow: visible; }
.running { position: absolute; top: 40px; height: 3px; width: 6px; border-radius: 2px; background: #858585; }
.chrome { left: 673px; }
.spotify { left: 1201px; }
.snip { left: 1241px; width: 14px; background: #777; }
.clock { display: flex; flex-direction: column; padding: 7px 22px 0 0; font-size: 12px; line-height: 16px; color: #555; letter-spacing: -0.180px; text-align: right; white-space: nowrap; }
.clock span { width: max-content; margin-left: auto; }
```
